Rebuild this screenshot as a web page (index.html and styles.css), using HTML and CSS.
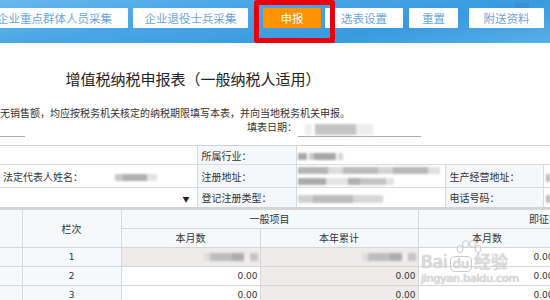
FILE: index.html
```html
<!DOCTYPE html>
<html lang="zh-CN">

<head>
    <meta charset="UTF-8">
    <meta name="viewport" content="width=device-width, initial-scale=1.0">
    <title>增值税纳税申报表</title>
    <link rel="stylesheet" href="styles.css">
</head>

<body>
    <div id="toolbar">
        <button class="tool-btn btn-wide">企业重点群体人员采集</button>
        <button class="tool-btn btn-mid">企业退役士兵采集</button>
        <button class="tool-btn btn-submit">申报</button>
        <button class="tool-btn btn-select">选表设置</button>
        <button class="tool-btn btn-reset">重置</button>
        <button class="tool-btn btn-attach">附送资料</button>
        <span class="bar-mark"></span>
        <!-- highlight drawn over the submit button -->
        <div class="highlight"></div>
    </div>

    <div id="report">
        <h2 class="report-title">增值税纳税申报表（一般纳税人适用）</h2>
        <p class="notice">无销售额，均应按税务机关核定的纳税期限填写本表，并向当地税务机关申报。</p>

        <div class="date-row">
            <span class="blank-line"></span>
            <span class="date-label">填表日期：</span>
            <span class="date-field">
                <span class="blur blur-date"></span>
            </span>
        </div>

        <table class="info-table">
            <colgroup>
                <col style="width:197px">
                <col style="width:99px">
                <col style="width:149px">
                <col style="width:98px">
                <col style="width:157px">
            </colgroup>
            <tr class="row-a">
                <td class="first"></td>
                <td class="label">所属行业：</td>
                <td colspan="3"><span class="blur blur-short"></span></td>
            </tr>
            <tr class="row-b">
                <td class="first">法定代表人姓名：<span class="blur blur-name"></span></td>
                <td class="label">注册地址：</td>
                <td class="value-tall">
                    <span class="blur blur-long"></span>
                    <span class="blur blur-long2"></span>
                </td>
                <td class="label">生产经营地址：</td>
                <td><span class="blur blur-edge"></span></td>
            </tr>
            <tr class="row-c">
                <td class="first select-cell"><span class="arrow">▼</span></td>
                <td class="label">登记注册类型：</td>
                <td><span class="blur blur-type"></span></td>
                <td class="label">电话号码：</td>
                <td><span class="blur blur-edge"></span></td>
            </tr>
        </table>

        <table class="data-table">
            <colgroup>
                <col style="width:22px">
                <col style="width:99px">
                <col style="width:139px">
                <col style="width:158px">
                <col style="width:138px">
                <col style="width:144px">
            </colgroup>
            <tr>
                <th class="first" rowspan="2"></th>
                <th rowspan="2">栏次</th>
                <th colspan="2">一般项目</th>
                <th colspan="2">即征即退项目</th>
            </tr>
            <tr>
                <th>本月数</th>
                <th>本年累计</th>
                <th>本月数</th>
                <th>本年累计</th>
            </tr>
            <tr class="data-row">
                <td class="first"></td>
                <td class="line-no">1</td>
                <td class="locked num"><span class="blur blur-num"></span></td>
                <td class="locked num"><span class="blur blur-num"></span></td>
                <td class="num">0.00</td>
                <td class="locked num">0.00</td>
            </tr>
            <tr class="data-row">
                <td class="first"></td>
                <td class="line-no">2</td>
                <td class="num">0.00</td>
                <td class="locked num">0.00</td>
                <td class="num">0.00</td>
                <td class="locked num">0.00</td>
            </tr>
            <tr class="data-row">
                <td class="first"></td>
                <td class="line-no">3</td>
                <td class="num">0.00</td>
                <td class="locked num">0.00</td>
                <td class="num">0.00</td>
                <td class="locked num">0.00</td>
            </tr>
        </table>

        <!-- watermark -->
        <div class="watermark">
            <svg class="paw" width="26" height="13" viewBox="0 0 26 13">
                <ellipse cx="4" cy="9" rx="3" ry="3.5" />
                <ellipse cx="9.5" cy="4" rx="3" ry="3.5" />
                <ellipse cx="16.5" cy="4" rx="3" ry="3.5" />
                <ellipse cx="22" cy="9" rx="3" ry="3.5" />
            </svg>
            <div class="wm-brand">Bai<span class="wm-du">du</span>经验</div>
            <div class="wm-url">jingyan.baidu.com</div>
        </div>
    </div>
</body>

</html>
```

FILE: styles.css
```css
body {
    font-family: "Noto Sans CJK SC", "Noto Sans", sans-serif;
    color: #333;
    margin: 0;
    padding: 0;
    width: 550px;
    height: 300px;
    overflow: hidden;
    background-color: #fff;
}

#toolbar {
    position: relative;
    display: flex;
    align-items: flex-start;
    gap: 5px;
    height: 43px;
    padding-top: 8px;
    box-sizing: border-box;
    margin-left: -19px;
    background: linear-gradient(170deg, #6ab9ec 0%, #4aa6e6 35%, #3a9ae0 70%, #56b0e8 100%);
}

.tool-btn {
    flex: none;
    height: 20px;
    padding: 0;
    border: none;
    border-radius: 1px;
    background-color: #fff;
    color: #6aa5dd;
    font-family: inherit;
    font-size: 11.5px;
    line-height: 20px;
    text-align: center;
}

.btn-wide {
    width: 147px;
}

.btn-mid {
    width: 115px;
}

.btn-submit {
    width: 58px;
    margin-left: 10px;
    background-color: #ff9200;
    color: #fff;
}

.btn-select {
    width: 78px;
    margin-left: -1px;
}

.btn-reset {
    width: 49px;
    margin-left: 1px;
}

.btn-attach {
    width: 75px;
    margin-left: 6px;
}

.bar-mark {
    position: absolute;
    left: 534px;
    top: 3px;
    width: 14px;
    height: 5px;
    background-color: #3f8fd0;
}

.highlight {
    position: absolute;
    left: 273px;
    top: 0;
    width: 81px;
    height: 43px;
    box-sizing: border-box;
    border: 5px solid #e8000b;
    border-radius: 3px;
}

#report {
    position: relative;
    padding-top: 26px;
}

.report-title {
    width: 386px;
    margin: 0;
    font-size: 15px;
    font-weight: normal;
    line-height: 20px;
    text-align: center;
    color: #222;
}

.notice {
    margin: 17px 0 0;
    font-size: 10px;
    line-height: 14px;
    white-space: nowrap;
}

.date-row {
    display: flex;
    align-items: flex-start;
    height: 25px;
    font-size: 10px;
}

.blank-line {
    width: 25px;
    height: 16px;
    border-bottom: 1px solid #a8a8a8;
}

.date-label {
    margin-left: 222px;
    line-height: 14px;
    white-space: nowrap;
}

.date-field {
    width: 123px;
    height: 16px;
    margin-left: 1px;
    border-bottom: 1px solid #a8a8a8;
}

/* blurred private values */
.blur {
    display: inline-block;
    vertical-align: middle;
    filter: blur(0.8px);
}

.blur-date {
    width: 68px;
    height: 11px;
    margin: 1px 0 0 7px;
    background: linear-gradient(90deg, #eee 0 7px, #fff 7px 10px, #c4c4c4 10px 51px, #e8e8e8 51px 52px, #ededed 52px 68px);
}

.blur-short {
    width: 45px;
    height: 7px;
    margin-left: 0;
    background: linear-gradient(90deg, #a9a9a9 0 9px, #fff 9px 11px, #c8c8c8 11px 16px, #a6a6a6 16px 38px, #fff 38px 40px, #d6d6d6 40px 45px);
}

.blur-name {
    width: 42px;
    height: 7px;
    margin-left: 32px;
    background: linear-gradient(90deg, #c8c8c8 0 8px, #b0b0b0 8px 32px, #e2e2e2 32px 42px);
}

.blur-long {
    display: block;
    width: 142px;
    height: 7px;
    background: linear-gradient(90deg, #b4b4b4 0 30px, #dcdcdc 30px 45px, #bcbcbc 45px 80px, #d4d4d4 80px 95px, #b8b8b8 95px 130px, #e0e0e0 130px 142px);
}

.blur-long2 {
    display: block;
    width: 96px;
    height: 7px;
    margin-top: 4px;
    background: linear-gradient(90deg, #aaa 0 28px, #e4e4e4 28px 50px, #b0b0b0 50px 62px, #c4c4c4 62px 88px, #e4e4e4 88px 96px);
}

.blur-type {
    width: 85px;
    height: 8px;
    background: linear-gradient(90deg, #d0d0d0 0 15px, #bcbcbc 15px 55px, #d8d8d8 55px 85px);
}

.blur-edge {
    width: 4px;
    height: 8px;
    margin-left: -2px;
    background-color: #b8b8b8;
}

.blur-num {
    width: 54px;
    height: 8px;
    background: linear-gradient(90deg, #ddd 0 6px, #bdbdbd 6px 28px, #adadad 28px 40px, #f0eded 40px 46px, #c4c4c4 46px 54px);
}

/* tables */
table {
    border-collapse: collapse;
    table-layout: fixed;
    font-size: 10px;
}

.info-table {
    width: 700px;
}

.info-table td {
    padding: 0 0 0 4px;
    border: 1px solid #dadada;
    white-space: nowrap;
    overflow: hidden;
}

.info-table td.first {
    border-left: none;
    padding-left: 3px;
}

.info-table .label {
    background-color: #f5f8fb;
}

.info-table .value-tall {
    padding-left: 1px;
}

.info-table td:nth-child(3) {
    padding-left: 1px;
}

.row-a {
    height: 19px;
}

.row-a td {
    border-top: 1px solid #d0d0d0;
}

.row-b {
    height: 23px;
}

.row-c {
    height: 20px;
}

.row-c td {
    border-bottom: 2px solid #d4d4d4;
}

.select-cell {
    text-align: right;
    padding-right: 5px !important;
}

.arrow {
    font-size: 7px;
    color: #222;
    margin-right: 2px;
}

.data-table {
    width: 700px;
}

.data-table th,
.data-table td {
    height: 18px;
    padding: 0;
    border: 1px solid #d6d6d6;
    font-weight: normal;
    text-align: center;
    white-space: nowrap;
    overflow: hidden;
}

.data-table th {
    background-color: #f6f9fc;
}

.data-table .first {
    border-left: none;
    background-color: #f6f9fc;
}

.data-row td {
    border-top-color: #cfcfcf;
}

.line-no {
    background-color: #f6f9fc;
    font-family: "DejaVu Sans", sans-serif;
    font-size: 9px;
}

.num {
    text-align: right !important;
    padding-right: 2px !important;
    font-family: "DejaVu Sans", sans-serif;
    font-size: 9px;
    color: #333;
}

.locked {
    background-color: #efebeb;
}

.watermark {
    position: absolute;
    left: 421px;
    top: 197px;
    width: 100px;
    color: rgba(255, 255, 255, 0.55);
    text-shadow: 0 0 1px #b5b5b5, 0 0 1px #b5b5b5;
    font-family: "DejaVu Sans", sans-serif;
    pointer-events: none;
}

.paw {
    display: block;
    margin-left: 35px;
    fill: rgba(255, 255, 255, 0.4);
    stroke: #c8c8c8;
    stroke-width: 1;
}

.wm-brand {
    font-size: 17px;
    line-height: 19px;
    white-space: nowrap;
}

.wm-du {
    display: inline-block;
    font-size: 13px;
    line-height: 14px;
    margin: 0 2px;
    padding: 0 2px;
    border: 1px solid #c8c8c8;
    border-radius: 5px;
}

.wm-url {
    font-size: 11px;
    line-height: 13px;
    letter-spacing: -0.2px;
}
```
